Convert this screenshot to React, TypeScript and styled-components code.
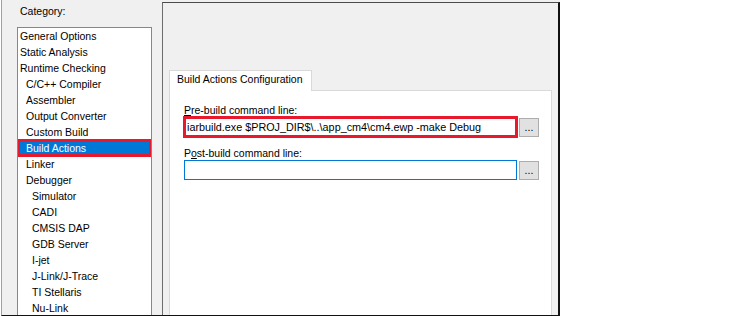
import styled, { createGlobalStyle } from "styled-components";

const GlobalStyle = createGlobalStyle`
  body {
    margin: 0;
    background: #fff;
    font-family: "Liberation Sans", Arial, sans-serif;
  }
`;

const Dialog = styled.div`
  display: flex;
  width: 559px;
  height: 316px;
  margin-left: 1px;
  box-sizing: border-box;
  border-left: 1px solid #a0a0a0;
  border-bottom: 1px solid #111;
  background: #f0f0f0;
  overflow: hidden;
  font-size: 10.5px;
  color: #000;
`;

const Sidebar = styled.div`
  width: 160px;
  flex-shrink: 0;
  display: flex;
  flex-direction: column;
  box-sizing: border-box;
  padding: 5px 0 0 15px;
`;

const Caption = styled.div`
  margin-left: 3px;
  line-height: 13px;
  height: 13px;
`;

const ListBox = styled.ul`
  list-style: none;
  margin: 9px 0 0;
  padding: 0;
  width: 135px;
  box-sizing: border-box;
  flex: 1;
  background: #fff;
  border: 1px solid #828790;
  border-bottom: none;
  overflow: hidden;
`;

const Item = styled.li<{ $level: number; $selected?: boolean }>`
  position: relative;
  height: 16px;
  line-height: 16px;
  padding-left: ${(p) => 2 + p.$level * 6}px;
  white-space: nowrap;
  background: ${(p) => (p.$selected ? "#0078d7" : "transparent")};
  color: ${(p) => (p.$selected ? "#fff" : "#000")};
  ${(p) =>
    p.$selected &&
    `
    outline: 3px solid #e8192c;
    outline-offset: -2px;
  `}
`;

const Panel = styled.div`
  flex: 1;
  display: flex;
  flex-direction: column;
  margin-top: 2px;
  border-top: 1px solid #4b4b4b;
  border-left: 1px solid #6d6d6d;
  border-right: 2px solid #111;
  padding: 67px 6px 0 6px;
`;

const Tab = styled.div`
  align-self: flex-start;
  position: relative;
  z-index: 1;
  margin-bottom: -1px;
  padding: 2px 8px 5px 7px;
  line-height: 13px;
  background: #fff;
  border: 1px solid #d9d9d9;
  border-bottom: none;
  white-space: nowrap;
`;

const TabPage = styled.div`
  flex: 1;
  background: #fff;
  border: 1px solid #d9d9d9;
  border-bottom: none;
  padding: 13px 0 0 14px;
`;

const FieldLabel = styled.div`
  line-height: 13px;
  white-space: nowrap;
`;

const Key = styled.span`
  text-decoration: underline;
`;

const FieldRow = styled.div`
  display: flex;
  align-items: center;
  gap: 2px;
  margin-bottom: 10px;
`;

const TextBox = styled.input<{ $focused?: boolean; $marked?: boolean }>`
  width: 333px;
  height: 20px;
  box-sizing: border-box;
  margin: 0;
  padding: 0 2px;
  font-family: inherit;
  font-size: 10.8px;
  color: #000;
  background: #fff;
  border: 1px solid ${(p) => (p.$focused ? "#0078d7" : "#7a7a7a")};
  outline: ${(p) => (p.$marked ? "3px solid #e8192c" : "none")};
  outline-offset: -2px;
`;

const BrowseButton = styled.button`
  width: 20px;
  height: 19px;
  margin: 0;
  padding: 0;
  box-sizing: border-box;
  font-family: inherit;
  font-size: 10.5px;
  line-height: 15px;
  color: #000;
  background: #e1e1e1;
  border: 1px solid #adadad;
`;

const categories: [string, number][] = [
  ["General Options", 0],
  ["Static Analysis", 0],
  ["Runtime Checking", 0],
  ["C/C++ Compiler", 1],
  ["Assembler", 1],
  ["Output Converter", 1],
  ["Custom Build", 1],
  ["Build Actions", 1],
  ["Linker", 1],
  ["Debugger", 1],
  ["Simulator", 2],
  ["CADI", 2],
  ["CMSIS DAP", 2],
  ["GDB Server", 2],
  ["I-jet", 2],
  ["J-Link/J-Trace", 2],
  ["TI Stellaris", 2],
  ["Nu-Link", 2],
];

const App = () => {
  return (
    <>
      <GlobalStyle />
      <Dialog>
        <Sidebar>
          <Caption>Category:</Caption>
          <ListBox>
            {categories.map(([name, level]) => (
              <Item key={name} $level={level} $selected={name === "Build Actions"}>
                {name}
              </Item>
            ))}
          </ListBox>
        </Sidebar>
        <Panel>
          <Tab>Build Actions Configuration</Tab>
          <TabPage>
            <FieldLabel>
              <Key>P</Key>re-build command line:
            </FieldLabel>
            <FieldRow>
              <TextBox
                readOnly
                $marked
                value="iarbuild.exe $PROJ_DIR$\..\app_cm4\cm4.ewp -make Debug"
              />
              <BrowseButton>...</BrowseButton>
            </FieldRow>
            <FieldLabel>
              P<Key>o</Key>st-build command line:
            </FieldLabel>
            <FieldRow>
              <TextBox readOnly $focused value="" />
              <BrowseButton>...</BrowseButton>
            </FieldRow>
          </TabPage>
        </Panel>
      </Dialog>
    </>
  );
};

export default App;
